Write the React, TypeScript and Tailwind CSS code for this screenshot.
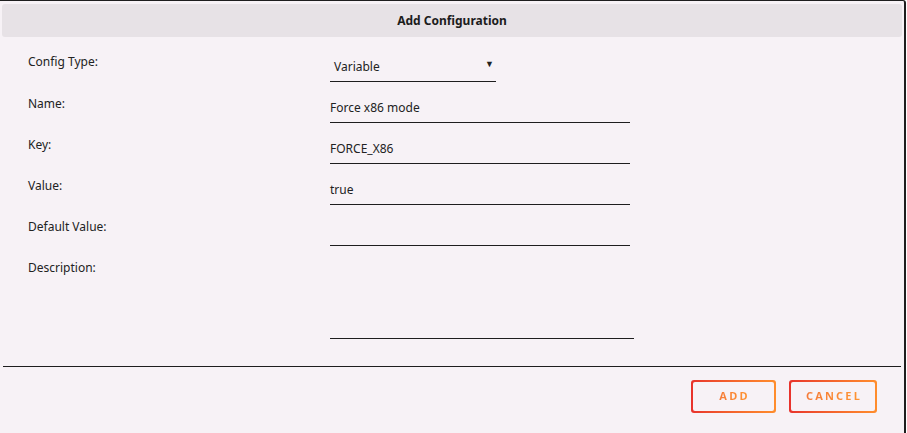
import React from "react";

const fields = [
  { label: "Name:", value: "Force x86 mode" },
  { label: "Key:", value: "FORCE_X86" },
  { label: "Value:", value: "true" },
  { label: "Default Value:", value: "" },
];

function GradButton({ text, w }: { text: string; w: string }) {
  return (
    <div className={`${w} h-[33px] rounded-[3px] p-[2px] bg-gradient-to-r from-[#e8322c] to-[#ff8d2c]`}>
      <div className="w-full h-full rounded-[2px] bg-[#f7f2f6] flex items-center justify-center">
        <span className="text-[11px] font-bold tracking-[0.2em] bg-gradient-to-r from-[#f57b3a] to-[#ff9430] bg-clip-text text-transparent pl-[2px]">
          {text}
        </span>
      </div>
    </div>
  );
}

export default function App() {
  return (
    <div
      className="w-[906px] h-[433px] bg-[#f7f2f6] border-t border-r-2 border-[#1e1e1e] rounded-tr-[3px] flex flex-col text-[#222]"
      style={{ fontFamily: '"Noto Sans", "Open Sans", sans-serif' }}
    >
      <div className="mx-[2px] mt-[3px] h-[33px] rounded-[3px] bg-[#e7e2e6] flex items-center justify-center">
        <span className="text-[12px] font-bold text-[#1c1c1c]">Add Configuration</span>
      </div>

      <div className="flex flex-col pl-[28px] pt-[15px]">
        <div className="flex h-[41px]">
          <div className="w-[302px] text-[12px] leading-[20px]">Config Type:</div>
          <div className="w-[166px] h-[30px] border-b border-[#1e1e1e] flex items-end justify-between pb-[6px]">
            <span className="text-[12px] leading-[16px] pl-[4px]">Variable</span>
            <span className="text-[9px] leading-[16px] pr-[2px] mb-[3px]">▼</span>
          </div>
        </div>
        {fields.map((f) => (
          <div key={f.label} className="flex h-[41px]">
            <div className="w-[302px] text-[12px] leading-[20px] pt-[1px]">{f.label}</div>
            <div className="w-[300px] h-[30px] border-b border-[#1e1e1e] flex items-end pb-[6px]">
              <span className="text-[12px] leading-[16px]">{f.value}</span>
            </div>
          </div>
        ))}
        <div className="flex h-[83px]">
          <div className="w-[302px] text-[12px] leading-[20px] pt-[1px]">Description:</div>
          <div className="w-[304px] h-[82px] border-b border-[#1e1e1e]"></div>
        </div>
      </div>

      <div className="mx-[3px] mt-[26px] border-t border-[#1e1e1e]"></div>

      <div className="flex justify-end gap-[13px] pr-[27px] pt-[13px]">
        <GradButton text="ADD" w="w-[85px]" />
        <GradButton text="CANCEL" w="w-[88px]" />
      </div>
    </div>
  );
}
